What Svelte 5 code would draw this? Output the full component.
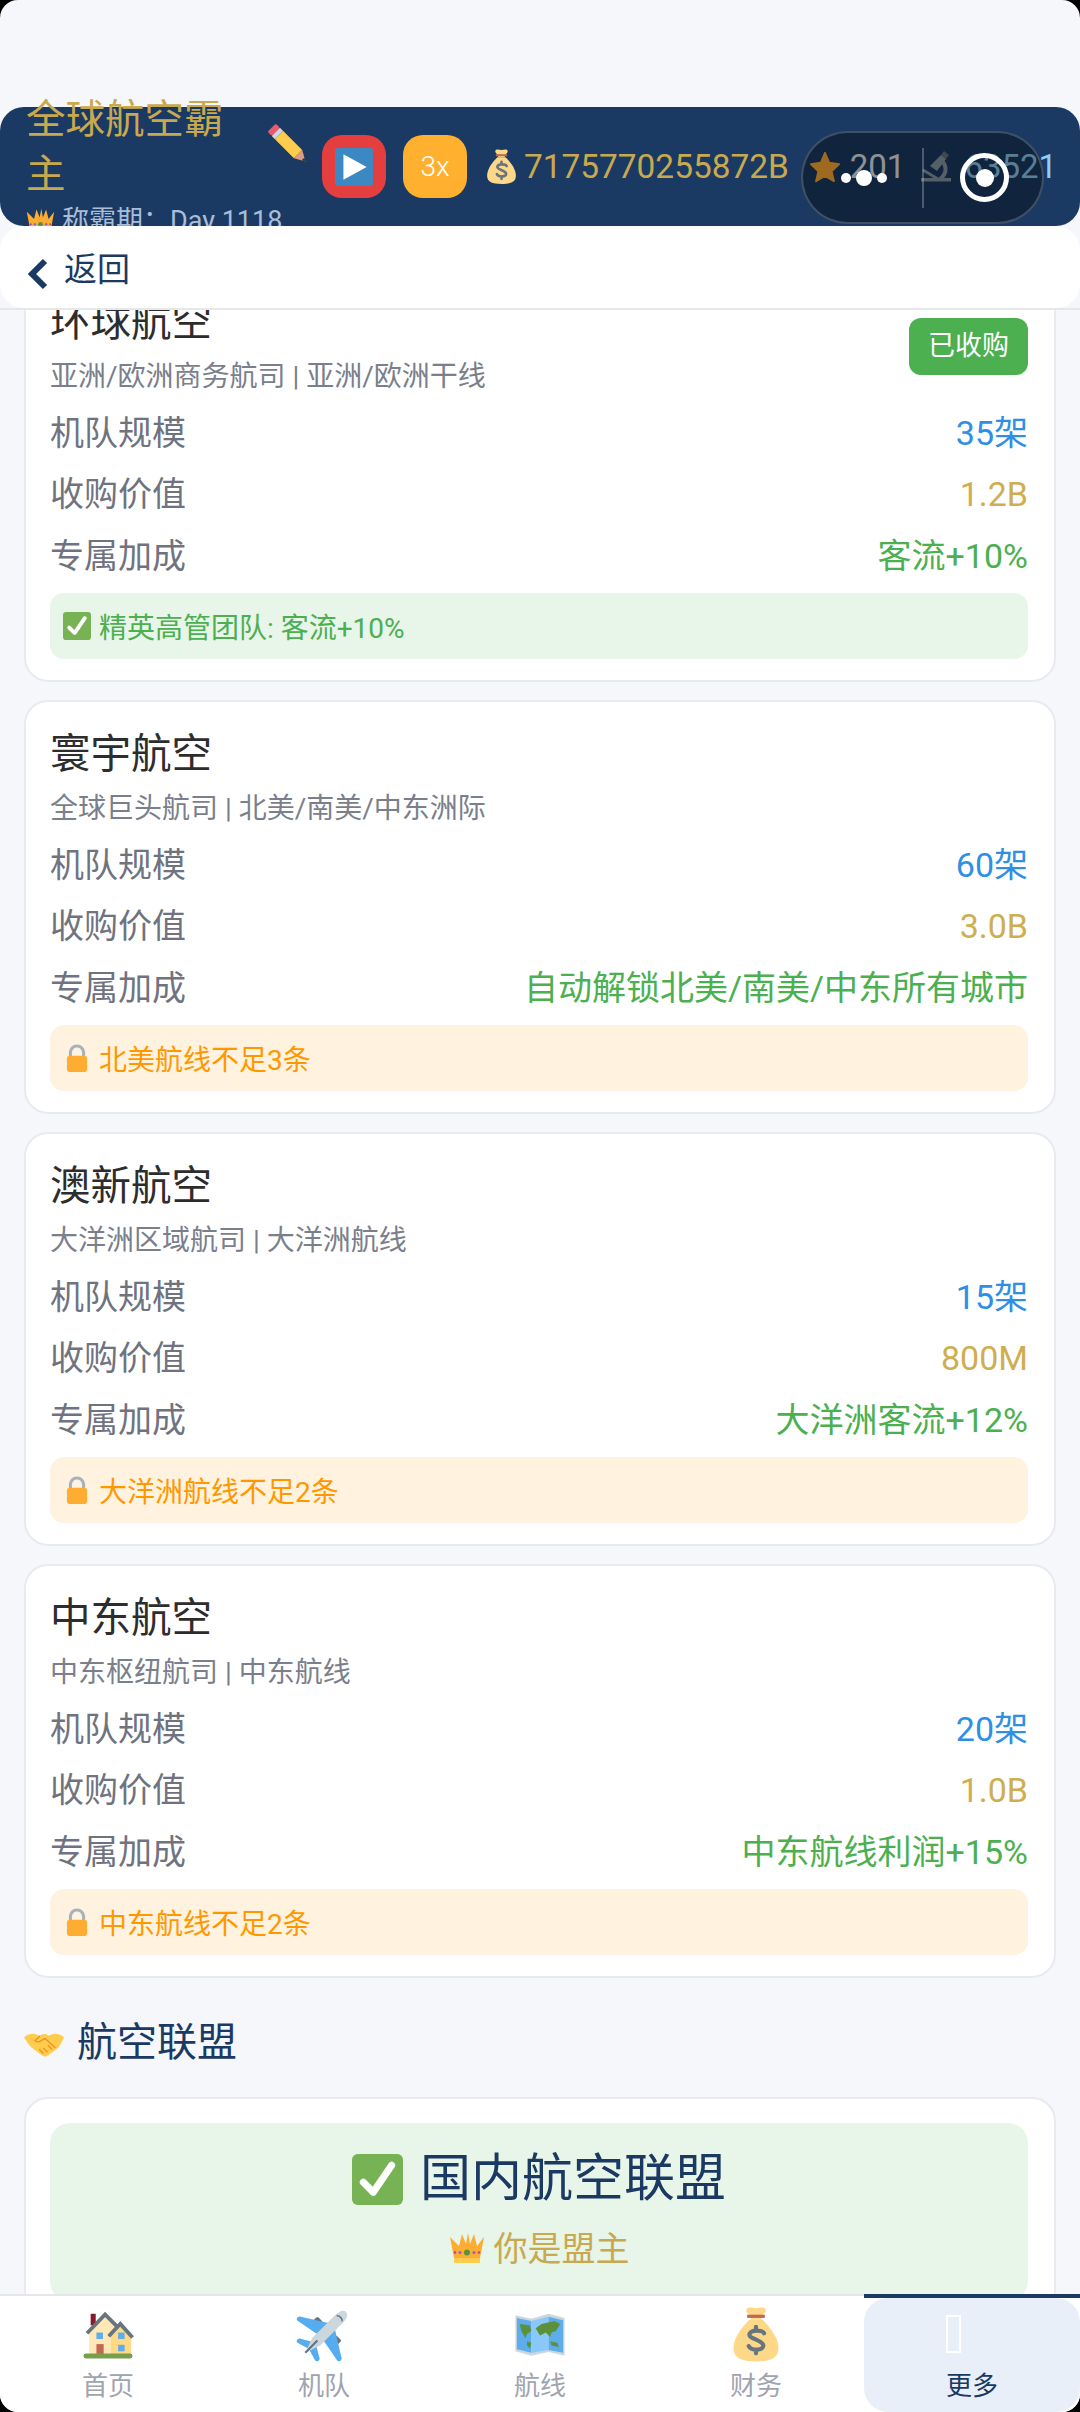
<script>
  const airlines = [
    {
      name: '环球航空', desc: '亚洲/欧洲商务航司 | 亚洲/欧洲干线', fleet: '35架', price: '1.2B',
      bonus: '客流+10%', done: true, note: '精英高管团队: 客流+10%'
    },
    {
      name: '寰宇航空', desc: '全球巨头航司 | 北美/南美/中东洲际', fleet: '60架', price: '3.0B',
      bonus: '自动解锁北美/南美/中东所有城市', note: '北美航线不足3条'
    },
    {
      name: '澳新航空', desc: '大洋洲区域航司 | 大洋洲航线', fleet: '15架', price: '800M',
      bonus: '大洋洲客流+12%', note: '大洋洲航线不足2条'
    },
    {
      name: '中东航空', desc: '中东枢纽航司 | 中东航线', fleet: '20架', price: '1.0B',
      bonus: '中东航线利润+15%', note: '中东航线不足2条'
    }
  ]
</script>

{#snippet check(size)}
  <svg class="ico" width={size} height={size} viewBox="0 0 36 36">
    <rect width="36" height="36" rx="4" fill="#77B255" />
    <path d="M8 20l7 7L28 8" fill="none" stroke="#fff" stroke-width="5" stroke-linecap="round" stroke-linejoin="round" />
  </svg>
{/snippet}

{#snippet lock(size)}
  <svg class="ico" width={size} height={size} viewBox="0 0 36 36">
    <path d="M9.5 18v-7a8.5 8.5 0 0 1 17 0v7" fill="none" stroke="#A7B3BC" stroke-width="4" />
    <rect x="5" y="15" width="26" height="21" rx="4" fill="#FFAC33" />
  </svg>
{/snippet}

{#snippet crown(size)}
  <svg class="ico" width={size} height={size} viewBox="0 0 36 36">
    <path d="M1 6l4 21h26l4-21-7 9-3-12-4 10-2-11-2 11-4-10-3 12z" fill="#FFAC33" />
    <rect x="5" y="27" width="26" height="5" fill="#FFCC4D" />
    <circle cx="18" cy="21.5" r="3" fill="#5C913B" />
    <circle cx="11" cy="21.5" r="1.6" fill="#9266CC" />
    <circle cx="25" cy="21.5" r="1.6" fill="#9266CC" />
    <circle cx="6" cy="21.5" r="1.3" fill="#C8437A" />
    <circle cx="30" cy="21.5" r="1.3" fill="#C8437A" />
  </svg>
{/snippet}

{#snippet bag(size)}
  <svg class="ico" width={size} height={size} viewBox="0 0 36 36">
    <path d="M14 9C10 13 4 20 4 27c0 6 5 8 14 8s14-2 14-8c0-7-6-14-10-18z" fill="#FDD888" />
    <path d="M12.5 2c1.5-1 3.500 0 5.500 0s4-1 5.500 0c1.200 1 .5 3-1.500 4l-1 3h-6l-1-3c-2-1-2.700-3-1.500-4z" fill="#FDD888" />
    <rect x="12.500" y="6" width="11" height="2" fill="#BF6952" />
    <path d="M23 17.500c-1-2-8-2.500-9 .5s8 3.500 8.500 7-7.500 3.500-9 .5M18 13.500v2.500M18 28v2" fill="none" stroke="#67757F" stroke-width="2.600" stroke-linecap="round" />
  </svg>
{/snippet}

{#snippet house(size)}
  <svg class="ico" width={size} height={size} viewBox="0 0 36 36">
    <rect x="6" y="4" width="3.500" height="8" fill="#8A1A2B" />
    <path d="M5 32V16L16 5l8 8v19z" fill="#FFE8B6" />
    <path d="M20 32V19l7-7 7 8v12z" fill="#FFD983" />
    <path d="M3.500 17.500L16 4.500l8 8M18.500 19.500l8-8.500 8.500 9.500" fill="none" stroke="#66757F" stroke-width="2.600" />
    <rect x="10" y="25" width="5" height="7" fill="#C1694F" />
    <rect x="10" y="17" width="4.500" height="4.500" fill="#5DADEC" />
    <rect x="25" y="17" width="4.500" height="4.500" fill="#5DADEC" />
    <rect x="25" y="25.500" width="4.500" height="4.500" fill="#5DADEC" />
    <rect x="1" y="31.500" width="34" height="3.500" rx="1.700" fill="#77A04C" />
  </svg>
{/snippet}

{#snippet plane(size)}
  <svg class="ico" width={size} height={size} viewBox="0 0 36 36">
    <g transform="rotate(45 18 18)">
      <rect x="7" y="13" width="5" height="5" rx="1" fill="#66757F" />
      <rect x="24" y="13" width="5" height="5" rx="1" fill="#66757F" />
      <path d="M15 11L-1 21c-1 1-1 3 1 3l16-3z" fill="#55ACEE" />
      <path d="M21 11l16 10c1 1 1 3-1 3l-16-3z" fill="#55ACEE" />
      <path d="M16 27l-7 4c-1 1-1 3 1 3l7-2z" fill="#55ACEE" />
      <path d="M20 27l7 4c1 1 1 3-1 3l-7-2z" fill="#55ACEE" />
      <path d="M18-2c2.500 0 3.500 3 3.500 7v20L18 35l-3.500-10V5c0-4 1-7 3.500-7z" fill="#CCD6DD" />
      <path d="M15.500 4c1-1.500 4-1.500 5 0" fill="none" stroke="#66757F" stroke-width="1" />
      <path d="M18 24v11" stroke="#66757F" stroke-width="1.400" />
    </g>
  </svg>
{/snippet}

{#snippet worldmap(size)}
  <svg class="ico" width={size} height={size} viewBox="0 0 36 36">
    <path d="M1 5l11 2.500L24 4l11 3v26l-11-2.500L12 33 1 30z" fill="#CCD6DD" />
    <path d="M2 7l10 2v22l-10-2.500z" fill="#5DADEC" />
    <path d="M12 9l12-3v23l-12 2z" fill="#88C9F9" />
    <path d="M24 6l10 2.500V31l-10-2z" fill="#5DADEC" />
    <path d="M4 11l7 1 1 4-3 2-1 3-3-5zM9 23l3 1-1 4-2-2zM15 14l4-3 9-2 4 2-3 5-3 1-1 3-3-3-4 2zM25 23l5 1 1 3-5-1z" fill="#5C913B" />
  </svg>
{/snippet}

{#snippet handshake(size)}
  <svg class="ico" width={size} height={size} viewBox="0 0 36 36">
    <path d="M0 13c3-3 7-4 10-3l4 1.500c3-2 6-2 8 0l4-1.500c3-1 7 0 10 3l-3 6c-2 4-7 7-11 10-2.500 1.500-4.500 1.500-6 0-4-3-9-6-12-10z" fill="#FFCC4D" />
    <path d="M14 12l-4 4c2 2 4 1 6-.5l3-1.500 9 8M17 27l-3-3M21 26l-3-3M25 23.500l-3-3" fill="none" stroke="#F19020" stroke-width="1.200" stroke-linecap="round" />
  </svg>
{/snippet}

<div class="phone">
  <header class="topbar">
    <div class="who">
      <div class="who-name">全球航空霸主</div>
      <div class="who-sub">{@render crown(29)} 称霸期：Day 1118</div>
    </div>
    <svg class="ico pencil" width="42" height="42" viewBox="0 0 36 36">
      <g transform="rotate(-45 18 18)">
        <rect x="13" y="-3" width="10" height="5" rx="1.500" fill="#EA596E" />
        <rect x="13" y="2" width="10" height="4" fill="#CCD6DD" />
        <rect x="13" y="6" width="10" height="23" fill="#FFCC4D" />
        <path d="M13 29h10l-5 9z" fill="#D99E82" />
        <path d="M16.400 35h3.200L18 38z" fill="#292F33" />
      </g>
    </svg>
    <button class="square red">
      <svg width="38" height="38" viewBox="0 0 36 36">
        <rect width="36" height="36" rx="3" fill="#3B88C3" />
        <path d="M8 6l22 12L8 30z" fill="#fff" />
      </svg>
    </button>
    <button class="square amber">3x</button>
    <div class="stat cash">{@render bag(37)}<span>7175770255872B</span></div>
    <div class="stat rep">
      <svg class="ico" width="34" height="34" viewBox="0 0 36 36">
        <path d="M18 3l4.500 10.500L33 15l-8 7.500L27.500 33 18 27.500 8.500 33 11 22.500 3 15l10.500-1.500z" fill="#FFAC33" stroke="#FFAC33" stroke-width="2" stroke-linejoin="round" />
      </svg>
      <span>201</span>
    </div>
    <div class="stat tech">
      <svg class="ico" width="36" height="36" viewBox="0 0 36 36">
        <rect x="3" y="29" width="30" height="3.500" fill="#8899A6" />
        <path d="M5 21l15 9" fill="none" stroke="#8899A6" stroke-width="3" />
        <path d="M24 12c5 5 5 13-2 18" fill="none" stroke="#8899A6" stroke-width="4" />
        <path d="M26 2l5 4-3 4-5-4z" fill="#66757F" />
        <path d="M23 6l5 4-9 12-7-5z" fill="#8899A6" />
      </svg>
      <span>63521</span>
    </div>
  </header>

  <div class="capsule">
    <div class="dots"><i></i><i class="big"></i><i></i></div>
    <div class="sep"></div>
    <div class="ring"><i></i></div>
  </div>

  <div class="backwrap">
    <nav class="backbar">
      <svg width="22" height="32" viewBox="0 0 22 32">
        <path d="M18 3L5 16l13 13" fill="none" stroke="#1a3a63" stroke-width="6" />
      </svg>
      <span>返回</span>
    </nav>
  </div>

  <main class="body">
    <div class="list">
      {#each airlines as a}
        <article class="card">
          <div class="card-head">
            <div>
              <h3>{a.name}</h3>
              <p>{a.desc}</p>
            </div>
            {#if a.done}
              <span class="owned">已收购</span>
            {/if}
          </div>
          <div class="row"><span>机队规模</span><b class="blue">{a.fleet}</b></div>
          <div class="row"><span>收购价值</span><b class="gold">{a.price}</b></div>
          <div class="row"><span>专属加成</span><b class="green">{a.bonus}</b></div>
          {#if a.done}
            <div class="note ok">{@render check(28)}<span>{a.note}</span></div>
          {:else}
            <div class="note locked">{@render lock(28)}<span>{a.note}</span></div>
          {/if}
        </article>
      {/each}

      <h2 class="section">{@render handshake(40)}<span>航空联盟</span></h2>

      <article class="card alliance">
        <div class="panel">
          <div class="panel-title">{@render check(51)}<span>国内航空联盟</span></div>
          <div class="panel-sub">{@render crown(36)}<span>你是盟主</span></div>
        </div>
      </article>
    </div>
  </main>

  <footer class="tabs">
    <div class="tab"><div class="tab-in"><div class="slot">{@render house(52)}</div><span>首页</span></div></div>
    <div class="tab"><div class="tab-in"><div class="slot">{@render plane(56)}</div><span>机队</span></div></div>
    <div class="tab"><div class="tab-in"><div class="slot">{@render worldmap(52)}</div><span>航线</span></div></div>
    <div class="tab"><div class="tab-in"><div class="slot">{@render bag(58)}</div><span>财务</span></div></div>
    <div class="tab active">
      <div class="tab-in">
        <div class="slot tofu"><i></i></div>
        <span>更多</span>
      </div>
    </div>
  </footer>
</div>

<style>
  :global(body) {
    background: #000;
  }

  .phone {
    position: relative;
    display: flex;
    flex-direction: column;
    height: 2412px;
    padding-top: 107px;
    box-sizing: border-box;
    overflow: hidden;
    border-radius: 18px;
    background: #f5f7fb;
    color: #2d2d2d;
    font-family: Roboto, "Noto Sans CJK SC", sans-serif;
  }

  .ico {
    flex: none;
    display: block;
  }

  .topbar {
    flex: none;
    display: flex;
    align-items: center;
    height: 119px;
    padding-left: 26px;
    border-radius: 24px;
    background: #1a3a63;
  }

  .who {
    flex: none;
    width: 232px;
  }

  .who-name {
    color: #c9a94f;
    font-size: 39.500px;
    line-height: 55px;
  }

  .who-sub {
    display: flex;
    align-items: center;
    gap: 7px;
    color: #a9bdd8;
    font-size: 27px;
    line-height: 39px;
    white-space: nowrap;
  }

  .pencil {
    margin: -44px 0 0 10px;
  }

  .square {
    flex: none;
    display: flex;
    align-items: center;
    justify-content: center;
    width: 64px;
    height: 63px;
    padding: 0;
    border: 0;
    border-radius: 20px;
    font-family: inherit;
  }

  .red {
    margin-left: 12px;
    background: #e53e3e;
  }

  .amber {
    margin-left: 17px;
    background: #ffb02e;
    color: #fff;
    font-size: 28px;
    font-weight: 300;
  }

  .stat {
    flex: none;
    display: flex;
    align-items: center;
    font-size: 33px;
    white-space: nowrap;
  }

  .cash {
    gap: 4px;
    margin-left: 16px;
    color: #c9a94f;
    font-size: 33.400px;
  }

  .rep {
    gap: 8px;
    margin-left: 19px;
    color: #e6ebf2;
  }

  .tech {
    gap: 10px;
    margin-left: 13px;
    color: #90cdf4;
  }

  .capsule {
    position: absolute;
    top: 131px;
    left: 801px;
    display: flex;
    align-items: center;
    width: 243px;
    height: 93px;
    box-sizing: border-box;
    border: 2px solid rgba(255, 255, 255, 0.2);
    border-radius: 47px;
    background: rgba(0, 0, 0, 0.38);
  }

  .dots {
    display: flex;
    align-items: center;
    justify-content: center;
    gap: 5px;
    width: 119px;
    padding-left: 2px;
    box-sizing: border-box;
  }

  .dots i {
    width: 10px;
    height: 10px;
    border-radius: 50%;
    background: #fff;
  }

  .dots i.big {
    width: 16px;
    height: 16px;
  }

  .sep {
    width: 2px;
    height: 60px;
    background: rgba(255, 255, 255, 0.25);
  }

  .ring {
    display: flex;
    align-items: center;
    justify-content: center;
    width: 49px;
    height: 49px;
    margin-left: 36px;
    box-sizing: border-box;
    border: 5px solid #fff;
    border-radius: 50%;
  }

  .ring i {
    width: 18px;
    height: 18px;
    border-radius: 50%;
    background: #fff;
  }

  .backwrap {
    position: relative;
    z-index: 2;
    flex: none;
    border-bottom: 2px solid #e5e7eb;
    background: #f5f7fb;
  }

  .backbar {
    display: flex;
    align-items: center;
    gap: 15px;
    height: 82px;
    padding-left: 27px;
    border-radius: 24px;
    background: #fff;
    color: #1a3a63;
    font-size: 33px;
  }

  .backbar svg {
    margin-top: 14px;
  }

  .body {
    flex: 1;
    min-height: 0;
    overflow: hidden;
    padding: 0 24px;
  }

  /* scrolled a little, the first card runs under the back bar */
  .list {
    display: flex;
    flex-direction: column;
    gap: 18px;
    margin-top: -42px;
  }

  .card {
    box-sizing: border-box;
    padding: 25.500px 26px 21px 24px;
    border: 2px solid #e8eaf0;
    border-radius: 24px;
    background: #fff;
  }

  .card-head {
    display: flex;
    align-items: center;
    justify-content: space-between;
    margin-bottom: 11px;
  }

  h3 {
    margin: 0 0 8px;
    font-size: 40.500px;
    font-weight: 400;
    line-height: 52px;
    color: #2d2d2d;
  }

  .card-head p {
    margin: 0;
    color: #7b7f8c;
    font-size: 28px;
    line-height: 42px;
  }

  .owned {
    padding: 0 19px;
    border-radius: 12px;
    background: #4caf50;
    color: #fff;
    font-size: 27px;
    line-height: 57px;
  }

  .row {
    display: flex;
    justify-content: space-between;
    margin-bottom: 12px;
    color: #6f7380;
    font-size: 34px;
    line-height: 49.500px;
  }

  .row b {
    font-weight: 400;
  }

  .blue {
    color: #2f90e3;
  }

  .gold {
    color: #cfae52;
  }

  .green {
    color: #4caf50;
  }

  .note {
    display: flex;
    align-items: center;
    gap: 8px;
    height: 66px;
    margin-top: 11.500px;
    padding-left: 13px;
    border-radius: 14px;
    font-size: 28px;
  }

  .ok {
    background: #e8f5e9;
    color: #4caf50;
  }

  .locked {
    background: #fff3e0;
    color: #ff9800;
  }

  .section {
    display: flex;
    align-items: center;
    gap: 13px;
    margin: 21px 0 10px;
    color: #1a3a63;
    font-size: 40px;
    font-weight: 400;
    line-height: 52px;
  }

  .alliance {
    padding-top: 24px;
  }

  .panel {
    display: flex;
    flex-direction: column;
    align-items: center;
    padding: 22px 0 30px;
    border-radius: 20px;
    background: #e8f5e9;
  }

  .panel-title {
    display: flex;
    align-items: center;
    gap: 17px;
    color: #1a3a63;
    font-size: 51px;
    line-height: 68px;
  }

  .panel-sub {
    display: flex;
    align-items: center;
    gap: 9px;
    margin-top: 14px;
    color: #c9a94f;
    font-size: 34px;
    line-height: 44px;
  }

  .tabs {
    position: relative;
    z-index: 2;
    flex: none;
    display: grid;
    grid-template-columns: repeat(5, 1fr);
    height: 118px;
    box-sizing: border-box;
    border-top: 2px solid #e5e7eb;
    background: #fff;
  }

  .tab {
    margin-top: -2px;
    border-top: 4px solid transparent;
  }

  .tab-in {
    display: flex;
    flex-direction: column;
    align-items: center;
    height: 100%;
    padding-top: 10px;
    box-sizing: border-box;
    color: #a0a4af;
    font-size: 26px;
    line-height: 34px;
  }

  .tab-in span {
    margin-top: 9px;
  }

  .tab.active {
    border-top-color: #1a3a63;
  }

  .tab.active .tab-in {
    border-radius: 24px;
    background: #e9eff9;
    color: #1a3a63;
  }

  .slot {
    display: flex;
    align-items: center;
    justify-content: center;
    width: 52px;
    height: 52px;
  }

  .slot.tofu {
    justify-content: flex-start;
  }

  .slot i {
    display: block;
    width: 15px;
    height: 38px;
    box-sizing: border-box;
    border: 2px solid #fff;
  }
</style>
